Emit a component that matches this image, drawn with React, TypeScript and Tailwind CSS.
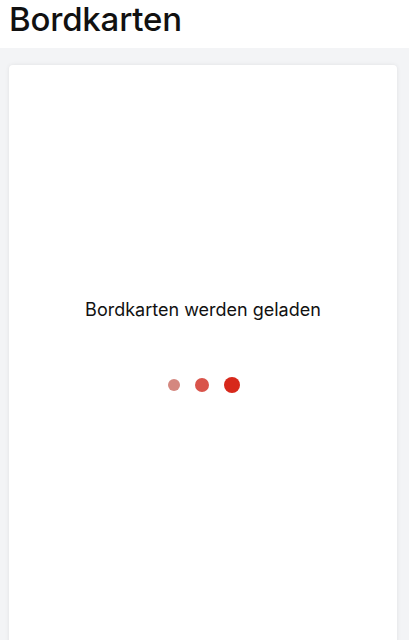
import React from 'react';

const App: React.FC = () => {
  return (
    <div className="min-h-[640px] bg-[#f3f4f6] font-['Inter',sans-serif] text-[#111] relative overflow-hidden">
      <div className="absolute right-[10px] top-[-14px] w-[120px] h-[26px] rounded-full bg-[#e5e7eb] blur-md opacity-70" />
      <header className="bg-white h-[48px] px-[9px] flex items-start relative">
        <h1 className="text-[33px] leading-[38px] font-medium tracking-[-0.2px]">Bordkarten</h1>
      </header>
      <main className="pt-[17px] px-[9px]">
        <div className="bg-white rounded-[4px] shadow-[0_0_4px_rgba(0,0,0,0.08)] w-[388px] h-[600px] flex flex-col items-center">
          <p className="mt-[233px] text-[18px] leading-[24px]">Bordkarten werden geladen</p>
          <div className="mt-[55px] flex items-center gap-[15px] pl-[2px]">
            <span className="w-[12px] h-[12px] rounded-full bg-[#d4877f]" />
            <span className="w-[14px] h-[14px] rounded-full bg-[#d9544b]" />
            <span className="w-[16px] h-[16px] rounded-full bg-[#d7281b]" />
          </div>
        </div>
      </main>
    </div>
  );
};

export default App;
